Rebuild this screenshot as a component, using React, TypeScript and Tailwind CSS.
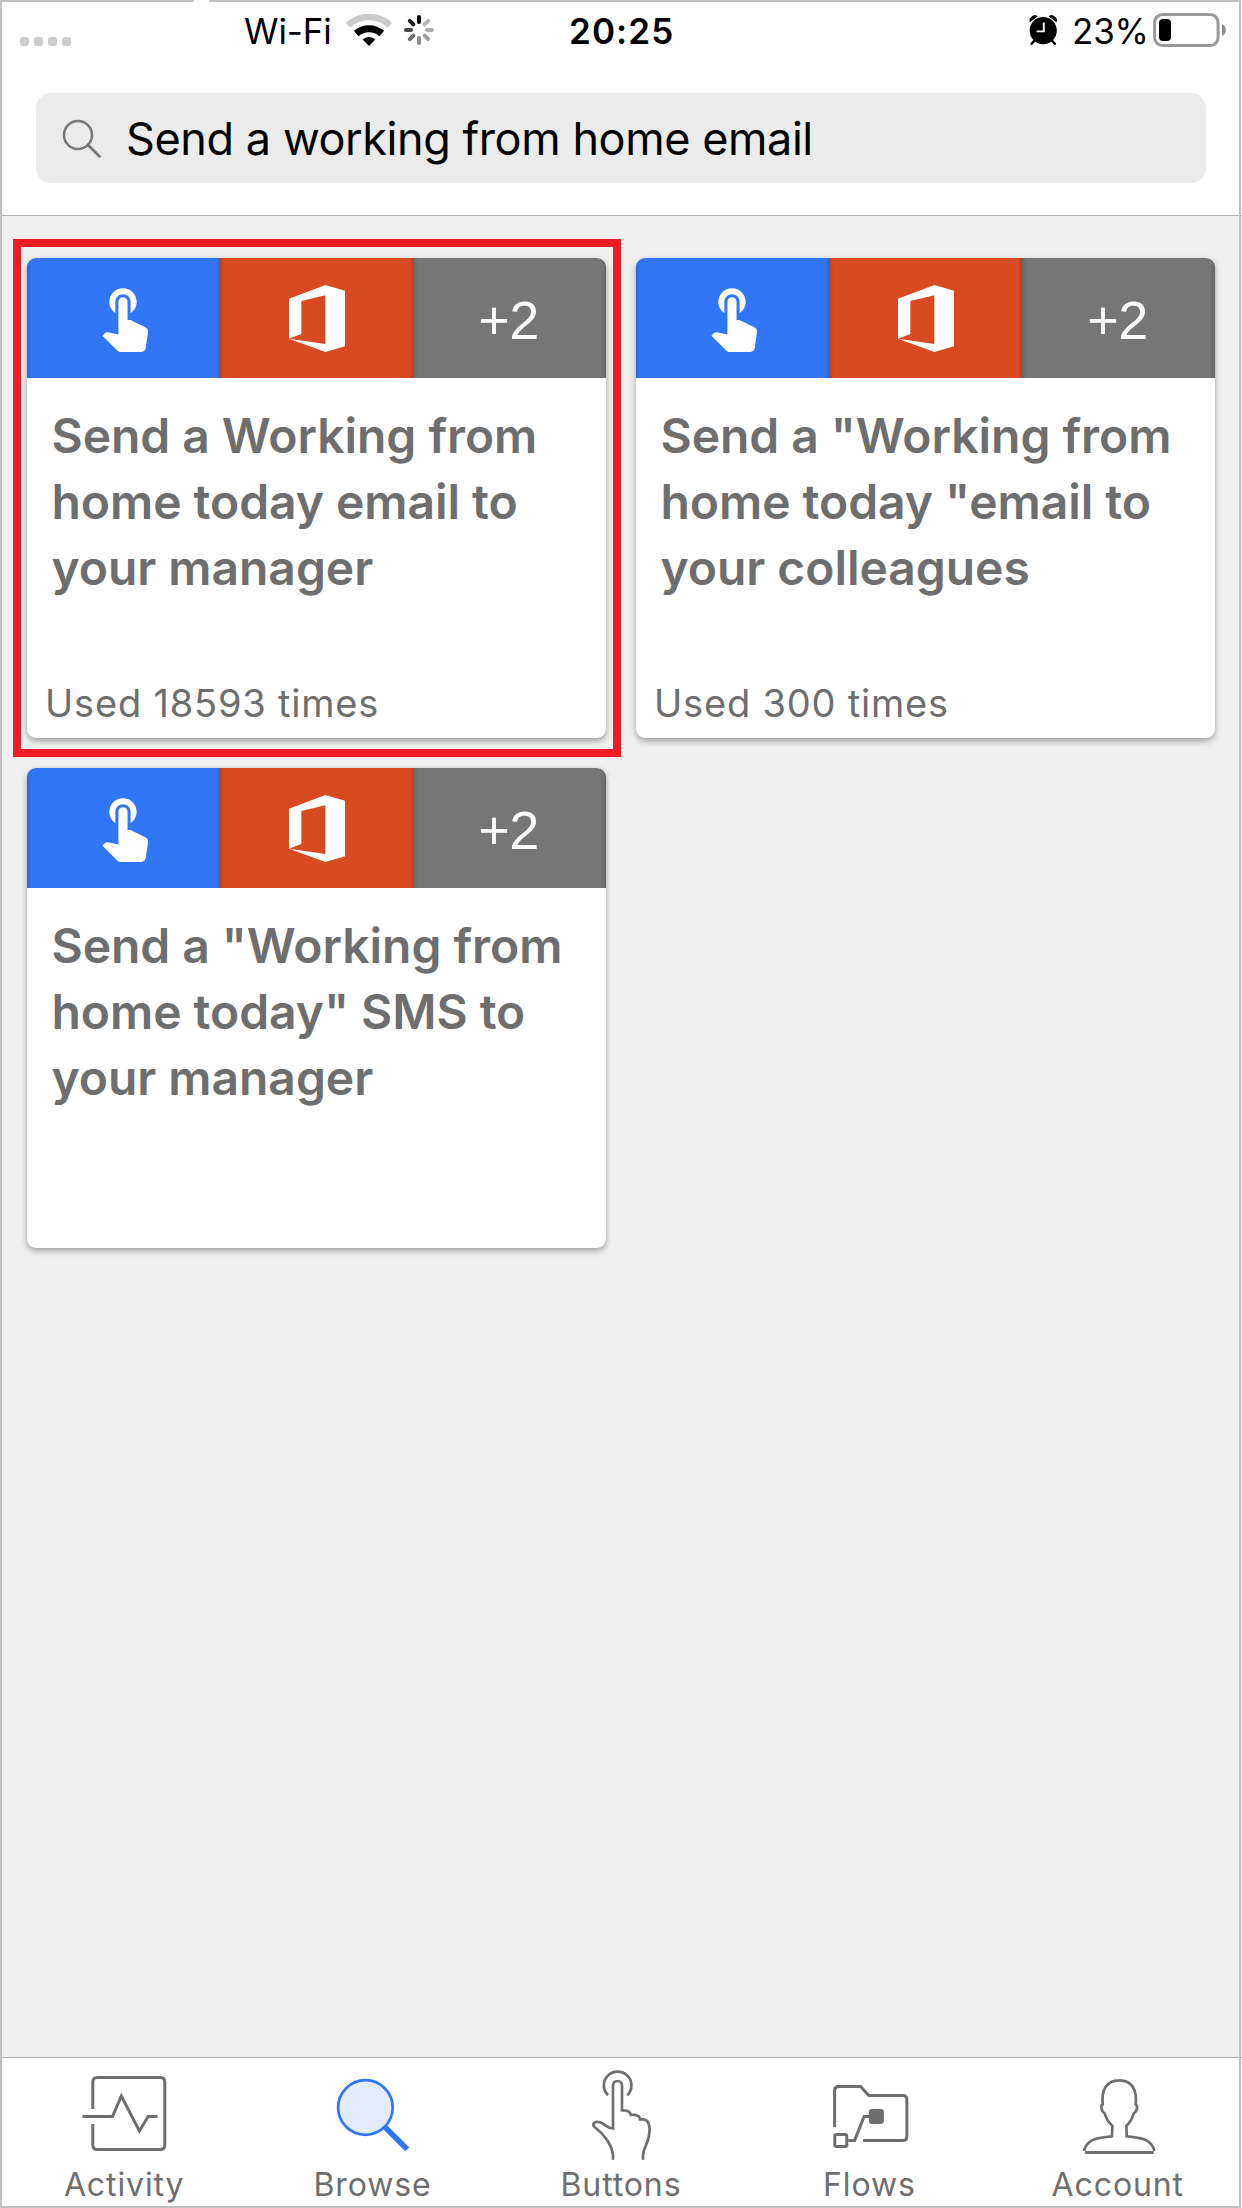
import React from 'react';

const GRAY = '#6e6e6e';
const BLUE = '#3077f7';

function WifiIcon() {
  return (
    <svg width="46" height="34" viewBox="0 0 46 34" className="shrink-0">
      <path d="M2 12.2A31 31 0 0 1 44 12.2" fill="none" stroke="#cbcbcb" strokeWidth="6.4" />
      <path d="M10.2 20.5A19.5 19.5 0 0 1 35.8 20.5" fill="none" stroke="#000" strokeWidth="7" />
      <path d="M23 33L16.6 26.6A9.4 9.4 0 0 1 29.4 26.6Z" fill="#000" />
    </svg>
  );
}

const SPOKES = ['#000', '#b5b5b5', '#aeaeae', '#a0a0a0', '#8c8c8c', '#6c6c6c', '#484848', '#202020'];

function Spinner() {
  return (
    <svg width="32" height="32" viewBox="-16 -16 32 32" className="shrink-0">
      {SPOKES.map((color, i) => (
        <line key={color} x1="0" y1="-13" x2="0" y2="-8" stroke={color} strokeWidth="4" strokeLinecap="round" transform={`rotate(${i * 45})`} />
      ))}
    </svg>
  );
}

function AlarmIcon() {
  return (
    <svg width="29" height="30" viewBox="0 0 29 30" className="shrink-0">
      <circle cx="14.2" cy="15.6" r="13.6" fill="#000" />
      <path d="M5.5 25.5L2.6 28.8M22.9 25.5l2.9 3.3" stroke="#000" strokeWidth="2.4" strokeLinecap="round" />
      <path d="M1 6.6A5 5 0 0 1 8.2 1.2ZM27.4 6.6A5 5 0 0 0 20.2 1.2Z" fill="#000" stroke="#000" strokeWidth="1" strokeLinejoin="round" />
      <path d="M14.8 7.5V16.4H7.6" fill="none" stroke="#fff" strokeWidth="1.9" />
    </svg>
  );
}

function BatteryIcon() {
  return (
    <svg width="74" height="34" viewBox="0 0 74 34" className="shrink-0">
      <rect x="1.6" y="1.5" width="63.5" height="31" rx="8" fill="none" stroke="#999" strokeWidth="3" />
      <rect x="6" y="6" width="12" height="22" rx="4" fill="#000" />
      <path d="M69 11Q72.8 12.6 72.8 17T69 23Z" fill="#8c8c8c" />
    </svg>
  );
}

function StatusBar() {
  return (
    <div className="flex h-[60px] items-center text-[35px] leading-[42px] text-black">
      <div className="ml-5 mt-[23px] flex gap-[5px]">
        <span className="size-[9px] rounded-[3px] bg-[#cccccc]" />
        <span className="size-[9px] rounded-[3px] bg-[#cccccc]" />
        <span className="size-[9px] rounded-[3px] bg-[#cccccc]" />
        <span className="size-[9px] rounded-[3px] bg-[#cccccc]" />
      </div>
      <span className="ml-[173px] mt-[1px] w-[102px] tracking-[-0.1px]">Wi-Fi</span>
      <WifiIcon />
      <span className="ml-[11px]">
        <Spinner />
      </span>
      <span className="ml-[134px] mt-[1px] w-[105px] font-semibold tracking-[1.1px]">20:25</span>
      <span className="ml-[355px]">
        <AlarmIcon />
      </span>
      <span className="ml-[14px] mt-[1px] w-[81px] tracking-[-0.2px]">23%</span>
      <BatteryIcon />
    </div>
  );
}

function SearchBar() {
  return (
    <div className="mx-9 mt-[33px] flex h-[90px] items-center rounded-[15px] bg-[#ebebeb] pl-[26px]">
      <svg width="40" height="42" viewBox="62 117 40 42" className="shrink-0">
        <circle cx="78" cy="135" r="14" fill="none" stroke="#777" strokeWidth="2.5" />
        <path d="M87.8 144.8L100.3 157.2" stroke="#777" strokeWidth="2.8" />
      </svg>
      <span className="ml-[24px] mt-[1px] text-[45px] leading-[60px] tracking-[-0.42px] text-black">Send a working from home email</span>
    </div>
  );
}

function TapIcon() {
  return (
    <svg width="73" height="73" viewBox="0 0 24 24" fill="#fff">
      <path d="M9 11.24V7.5C9 6.12 10.12 5 11.5 5S14 6.12 14 7.5v3.74c1.21-.81 2-2.18 2-3.74C16 5.01 13.99 3 11.5 3S7 5.01 7 7.5c0 1.56.79 2.93 2 3.74zm9.84 4.63l-4.54-2.26c-.17-.07-.35-.11-.54-.11H13v-6c0-.83-.67-1.5-1.5-1.5S10 6.67 10 7.5v10.74l-3.43-.72c-.08-.01-.15-.03-.24-.03-.31 0-.59.13-.79.33l-.79.8 4.94 4.94c.27.27.65.44 1.06.44h6.79c.75 0 1.33-.55 1.44-1.28l.75-5.27c.01-.07.02-.14.02-.2 0-.62-.38-1.16-.91-1.38z" />
    </svg>
  );
}

function OfficeIcon() {
  return (
    <svg width="56" height="67" viewBox="867 166 168 201" fill="#fff">
      <path d="M867 207L976 166L1035 183V350L976 367L867 327L976 343V197L904 214V313L867 327Z" />
    </svg>
  );
}

const TILE_EDGE = 'shadow-[inset_5px_0_4px_-4px_rgba(0,0,0,0.22),inset_-5px_0_4px_-4px_rgba(0,0,0,0.22)]';

function TemplateCard({ lines, used }: { lines: string[]; used?: string }) {
  return (
    <div className="flex h-[480px] flex-col overflow-hidden rounded-[9px] bg-white text-[#6e6e6e] shadow-[0_3px_6px_rgba(0,0,0,0.34)]">
      <div className="grid h-[120px] shrink-0 grid-cols-3 text-white">
        <div className={`flex items-center justify-center bg-[#3276f8] pb-[5px] pl-[2px] ${TILE_EDGE}`}>
          <TapIcon />
        </div>
        <div className={`flex items-center justify-center bg-[#d84b22] ${TILE_EDGE}`}>
          <OfficeIcon />
        </div>
        <div className={`flex items-center justify-center bg-[#767676] pr-[2px] pt-[3px] font-['Liberation_Sans',sans-serif] text-[54px] leading-[60px] tracking-[-0.5px] ${TILE_EDGE}`}>
          +2
        </div>
      </div>
      <h2 className="mt-[25px] whitespace-nowrap pl-[24.500px] text-[48px] font-semibold leading-[66px] tracking-[-0.05px]">
        {lines.map((line) => (
          <span key={line} className="block">
            {line}
          </span>
        ))}
      </h2>
      {used && <p className="mb-[11px] mt-auto pl-[18px] text-[38px] leading-[48px] tracking-[0.8px]">{used}</p>}
    </div>
  );
}

function Tab({ label, viewBox, children }: { label: string; viewBox: string; children: React.ReactNode }) {
  return (
    <div className="flex flex-col items-center">
      <svg width="90" height="102" viewBox={viewBox} fill="none" stroke={GRAY} strokeWidth="3">
        {children}
      </svg>
      <span className="mt-[6px] text-[32px] leading-[38px] tracking-[0.9px] text-[#6e6e6e]">{label}</span>
    </div>
  );
}

function TabBar() {
  return (
    <nav className="grid h-[151px] shrink-0 grid-cols-5 border-t border-[#b2b2b2] bg-white">
      <Tab label="Activity" viewBox="79.2 18 90 102">
        <path d="M93 69V42q0-4.5 4.5-4.5H160.500q4.500 0 4.500 4.500V105q0 4.500-4.500 4.500H97.500q-4.500 0-4.500-4.500V84" />
        <path d="M82.700 76.500H112.700L121.500 56L139.600 91L148.300 76.500H157.700" />
      </Tab>
      <Tab label="Browse" viewBox="327.6 18 90 102">
        <circle cx="365" cy="67.500" r="27.300" fill="#e2ecfe" stroke={BLUE} strokeWidth="2.700" />
        <path d="M385 87.500L406.800 109.300" stroke={BLUE} strokeWidth="5.600" />
      </Tab>
      <Tab label="Buttons" viewBox="576 18 90 102">
        <path d="M608 55.200A13.800 13.800 0 1 1 627.300 55.200" strokeWidth="2.700" />
        <path
          d="M613 119.700V115C612 105 604 94 594.500 87Q592.500 85 594 83C597.500 80.500 602 82.500 605.500 85.500Q608.500 88 613 88.500V45.500A4.500 4.500 0 0 1 622 45.500V70.500H625.500Q629.500 71 631 74.800H635Q639.500 75.500 640 79.300H643Q648.500 79.500 649.500 87C650.500 103 643 106 643 116V119.700"
          strokeWidth="2.700"
        />
      </Tab>
      <Tab label="Flows" viewBox="824.4 18 90 102">
        <path d="M835 87V50.500q0-4 4-4H861L869.300 55.500H903.300q4 0 4 4V96.500q0 4-4 4H863.500" />
        <rect x="835.200" y="94.500" width="12" height="12" rx="1.500" />
        <path d="M848.700 100.400H855L864.500 76.500H870" />
        <rect x="869.300" y="69" width="15" height="15" rx="3" fill={GRAY} stroke="none" />
      </Tab>
      <Tab label="Account" viewBox="1072.8 18 90 102">
        <path
          d="M1083.800 111C1086.500 98.500 1098 97.500 1111.700 96.300L1112.200 86C1108 82 1105.500 77.500 1104.500 73.500C1101 71 1100 66 1102.500 64.500C1101 50 1106 40.300 1119 40.300S1137 50 1135.500 64.500C1138 66 1137 71 1133.500 73.500C1132.500 77.500 1130 82 1126.200 86L1126.500 96.300C1140 97.500 1151.500 98.500 1154.200 111"
          strokeWidth="2.700"
        />
        <path d="M1085 112.500H1153.500" />
      </Tab>
    </nav>
  );
}

export default function App() {
  return (
    <div className="relative flex h-[2208px] w-[1242px] flex-col overflow-hidden bg-[#f0f0f0] font-['Inter',sans-serif]">
      <header className="h-[216px] shrink-0 border-b border-[#b2b2b2] bg-white">
        <StatusBar />
        <SearchBar />
      </header>
      <main className="grid flex-1 grid-cols-2 content-start gap-[30px] px-[27px] pt-[42px]">
        <div className="relative">
          <TemplateCard lines={['Send a Working from', 'home today email to', 'your manager']} used="Used 18593 times" />
          <div className="absolute -bottom-[19px] -left-[14px] -right-[15px] -top-[19px] border-8 border-[#ed1c24]" />
        </div>
        <TemplateCard lines={['Send a "Working from', 'home today "email to', 'your colleagues']} used="Used 300 times" />
        <TemplateCard lines={['Send a "Working from', 'home today" SMS to', 'your manager']} />
      </main>
      <TabBar />
      <div className="pointer-events-none absolute inset-y-0 left-0 right-[1px] border-2 border-[#c0c0c0]">
        <div className="absolute -top-[2px] left-[192px] h-[2px] w-[15px] bg-white" />
      </div>
    </div>
  );
}
